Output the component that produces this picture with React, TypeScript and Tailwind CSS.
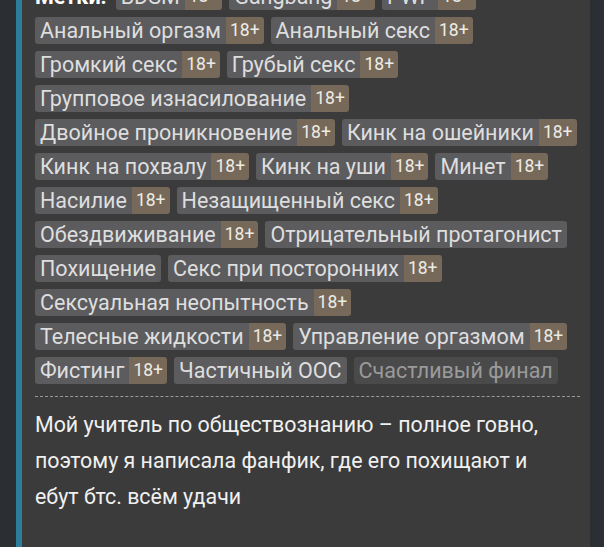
import React from 'react';

interface Tag {
  name: string;
  adult?: boolean;
  muted?: boolean;
}

// tags split into lines the way the fandom page wraps them
const tagRows: Tag[][] = [
  [{ name: 'BDSM', adult: true }, { name: 'Gangbang', adult: true }, { name: 'PWP', adult: true }],
  [{ name: 'Анальный оргазм', adult: true }, { name: 'Анальный секс', adult: true }],
  [{ name: 'Громкий секс', adult: true }, { name: 'Грубый секс', adult: true }],
  [{ name: 'Групповое изнасилование', adult: true }],
  [{ name: 'Двойное проникновение', adult: true }, { name: 'Кинк на ошейники', adult: true }],
  [{ name: 'Кинк на похвалу', adult: true }, { name: 'Кинк на уши', adult: true }, { name: 'Минет', adult: true }],
  [{ name: 'Насилие', adult: true }, { name: 'Незащищенный секс', adult: true }],
  [{ name: 'Обездвиживание', adult: true }, { name: 'Отрицательный протагонист' }],
  [{ name: 'Похищение' }, { name: 'Секс при посторонних', adult: true }],
  [{ name: 'Сексуальная неопытность', adult: true }],
  [{ name: 'Телесные жидкости', adult: true }, { name: 'Управление оргазмом', adult: true }],
  [{ name: 'Фистинг', adult: true }, { name: 'Частичный ООС' }, { name: 'Счастливый финал', muted: true }],
];

const TagChip: React.FC<{ tag: Tag }> = ({ tag }) => (
  <span className="flex h-[27px] rounded-[3px] overflow-hidden">
    <span
      className={
        tag.muted
          ? 'px-[5px] bg-[#4a4a4b] text-[#9a9a9a] text-[21.5px] leading-[27px] whitespace-nowrap'
          : 'px-[5px] bg-[#5c5c5e] text-[#dedede] text-[21.5px] leading-[27px] whitespace-nowrap'
      }
    >
      {tag.name}
    </span>
    {tag.adult && (
      <span className="px-[4px] bg-[#77695a] text-[#ecece6] text-[17.5px] leading-[27px]">18+</span>
    )}
  </span>
);

export default function App() {
  return (
    <div
      className="w-[604px] h-[547px] overflow-hidden flex bg-[#2b2e33]"
      style={{ fontFamily: 'Roboto, "Noto Sans", sans-serif' }}
    >
      <div className="w-[16px] shrink-0 bg-[#2b2e33]" />
      <div className="w-[6px] shrink-0 bg-[#2b7d9b]" />
      <div className="w-[568px] shrink-0 bg-[#3b3b3b] pl-[13px] pr-[10px]">
        <div className="-mt-[17px] flex flex-col gap-[7px]">
          {tagRows.map((row, i) => (
            <div key={i} className="flex items-center gap-[7px] whitespace-nowrap">
              {i === 0 && <span className="text-white font-bold text-[21.5px] leading-[27px] mr-[2px]">Метки:</span>}
              {row.map((tag) => (
                <TagChip key={tag.name} tag={tag} />
              ))}
            </div>
          ))}
        </div>
        <div className="mt-[12px] border-t border-dashed border-[#9a9a9a]" />
        <p className="mt-[10px] pr-[4px] text-[#f0f0f0] text-[21.4px] leading-[36px]">
          Мой учитель по обществознанию – полное говно, поэтому я написала фанфик, где его похищают и ебут бтс. всём удачи
        </p>
      </div>
    </div>
  );
}
